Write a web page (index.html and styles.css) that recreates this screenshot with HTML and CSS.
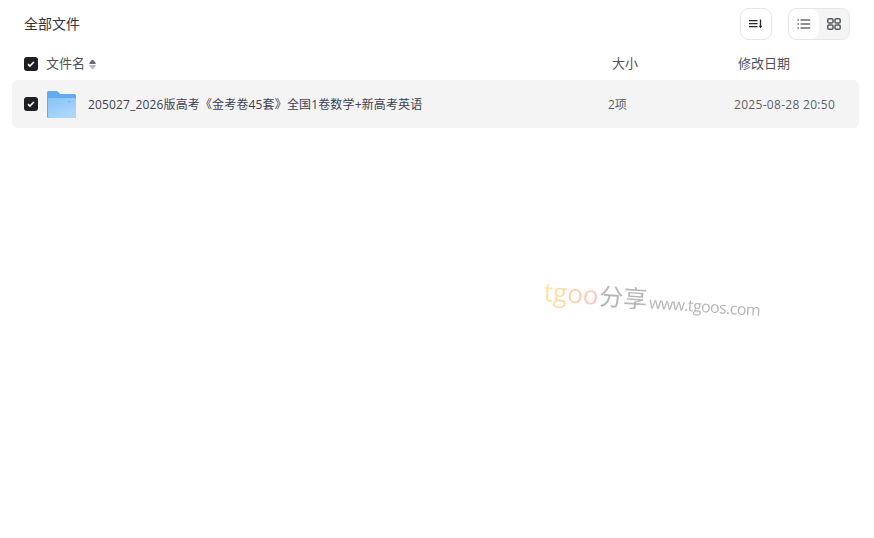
FILE: index.html
```html
<!DOCTYPE html>
<html>
  <head>
    <meta charset="UTF-8">
    <title>全部文件</title>
    <link rel="stylesheet" href="styles.css">
  </head>
  <body>
    <div class="toolbar">
      <span class="crumb">全部文件</span>
      <div class="tools">
        <button class="toolButton">
          <svg width="14" height="10" viewBox="0 0 14 10" fill="none" stroke="#25262b" stroke-width="1.2">
            <path d="M0 1.600h8.500M0 4.600h8.500M0 7.600h8.500"/>
            <path d="M11.500 .5v7" stroke-width="1.300"/>
            <path d="M9.800 6.800h3.400L11.500 9.500z" fill="#25262b" stroke="none"/>
          </svg>
        </button>
        <div class="viewSwitch">
          <span class="viewItem active">
            <svg width="14" height="10" viewBox="0 0 14 10" fill="none" stroke="#25262b" stroke-width="1.100">
              <path d="M3.500 1h9.700M3.500 5h9.700M3.500 9h9.700"/>
              <path d="M.5 1h1.500M.5 5h1.500M.5 9h1.500"/>
            </svg>
          </span>
          <span class="viewItem">
            <svg width="14" height="12" viewBox="0 0 14 12" fill="none" stroke="#55575e" stroke-width="1.500">
              <rect x=".8" y=".8" width="5.200" height="4.200" rx="1.300"/>
              <rect x="8" y=".8" width="5.200" height="4.200" rx="1.300"/>
              <rect x=".8" y="7" width="5.200" height="4.200" rx="1.300"/>
              <rect x="8" y="7" width="5.200" height="4.200" rx="1.300"/>
            </svg>
          </span>
        </div>
      </div>
    </div>

    <div class="listHead">
      <span class="check">
        <svg width="8" height="8" viewBox="0 0 8 8" fill="none" stroke="#fff" stroke-width="1.700"><path d="M1 4.200l1.900 1.900L6.900 2"/></svg>
      </span>
      <span class="colName">文件名
        <svg class="sortIcon" width="7" height="11" viewBox="0 0 8 12">
          <path d="M4 .5C5 .5 7.800 4 7.800 5.300H.2C.2 4 3 .5 4 .5z" fill="#6b6d75"/>
          <path d="M4 11.500C3 11.500 .2 8 .2 6.700h7.600C7.800 8 5 11.500 4 11.500z" fill="#b9babe"/>
        </svg>
      </span>
      <span class="colSize">大小</span>
      <span class="colDate">修改日期</span>
    </div>

    <div class="fileRow">
      <span class="check">
        <svg width="8" height="8" viewBox="0 0 8 8" fill="none" stroke="#fff" stroke-width="1.700"><path d="M1 4.200l1.900 1.900L6.900 2"/></svg>
      </span>
      <svg class="folder" width="29" height="27" viewBox="0 0 29 27">
        <defs>
          <linearGradient id="folderFront" x1="0" y1="0" x2="0.5" y2="1">
            <stop offset="0" stop-color="#86c2f9"/>
            <stop offset="1" stop-color="#acd7fc"/>
          </linearGradient>
        </defs>
        <path d="M0 1.500A1.500 1.500 0 0 1 1.500 0h8.700l3 3h14.300A1.500 1.500 0 0 1 29 4.500V27H1.500A1.500 1.500 0 0 1 0 25.500z" fill="#62abee"/>
        <path d="M1 7h26.500A1.500 1.500 0 0 1 29 8.500v17a1.500 1.500 0 0 1-1.500 1.500H2.500A1.500 1.500 0 0 1 1 25.500z" fill="url(#folderFront)"/>
        <rect x="21" y="10" width="3" height="1.200" fill="#78b8f2"/>
      </svg>
      <span class="fileName">205027_2026版高考《金考卷45套》全国1卷数学+新高考英语</span>
      <span class="fileSize">2项</span>
      <span class="fileDate">2025-08-28 20:50</span>
    </div>

    <!-- watermark sits over the page -->
    <div class="watermark"><span class="wmLogo">tgoo</span><span class="wmCn">分享</span><span class="wmUrl">www.tgoos.com</span></div>
  </body>
</html>
```

FILE: styles.css
```css
* {
  box-sizing: border-box;
  font-family: "Open Sans", "Noto Sans CJK SC", sans-serif;
}

body {
  margin: 0;
  padding: 0 15px 0 12px;
  background-color: #fff;
  color: #25262b;
  font-size: 12px;
}

.toolbar {
  display: flex;
  align-items: center;
  justify-content: space-between;
  height: 48px;
  padding: 0 9px 0 12px;
}

.crumb {
  padding-bottom: 2px;
  color: #33343a;
  font-size: 14px;
}

.tools {
  display: flex;
  gap: 16px;
}

.toolButton {
  display: flex;
  align-items: center;
  justify-content: center;
  width: 32px;
  height: 32px;
  padding: 0;
  border: 1px solid #e6e6e8;
  border-radius: 8px;
  background-color: #fff;
}

.viewSwitch {
  display: flex;
  width: 62px;
  height: 32px;
  border: 1px solid #e6e6e8;
  border-radius: 8px;
  background-color: #f4f4f5;
  overflow: hidden;
}

.viewItem {
  display: flex;
  flex: 1;
  align-items: center;
  justify-content: center;
}

.viewItem.active {
  border-radius: 8px;
  background-color: #fff;
}

.listHead, .fileRow {
  display: flex;
  align-items: center;
  padding-left: 12px;
}

.listHead {
  height: 32px;
  color: #4f5059;
  font-size: 13px;
}

.check {
  display: flex;
  flex: none;
  align-items: center;
  justify-content: center;
  width: 14px;
  height: 14px;
  border-radius: 3px;
  background-color: #1e1f24;
}

.colName {
  display: flex;
  align-items: center;
  gap: 4px;
  width: 566px;
  margin-left: 8px;
  padding-bottom: 3px;
}

.sortIcon {
  margin-top: 3px;
}

.colSize {
  width: 126px;
  padding-bottom: 3px;
}

.colDate {
  padding-bottom: 3px;
}

.fileRow {
  height: 48px;
  border-radius: 6px;
  background-color: #f4f4f5;
  color: #3e4050;
}

.folder {
  flex: none;
  margin-left: 9px;
}

.fileName {
  width: 521px;
  margin-left: 12px;
  letter-spacing: 0.15px;
  white-space: nowrap;
}

.fileSize {
  width: 126px;
  margin-left: -1px;
  color: #5c5e66;
}

.fileDate {
  color: #5c5e66;
  letter-spacing: 0.3px;
}

.watermark {
  position: absolute;
  left: 544px;
  top: 273px;
  display: flex;
  align-items: baseline;
  white-space: nowrap;
  transform: rotate(4deg);
  transform-origin: left center;
  opacity: 0.85;
}

.wmLogo {
  background: linear-gradient(90deg, #ffe08f, #ffb9a8);
  -webkit-background-clip: text;
  background-clip: text;
  color: transparent;
  font-size: 26px;
}

.wmCn {
  margin-left: 1px;
  color: #a9a9a9;
  font-size: 24px;
}

.wmUrl {
  margin-left: 2px;
  color: #a9a9a9;
  font-size: 16px;
  letter-spacing: -0.6px;
}
```
